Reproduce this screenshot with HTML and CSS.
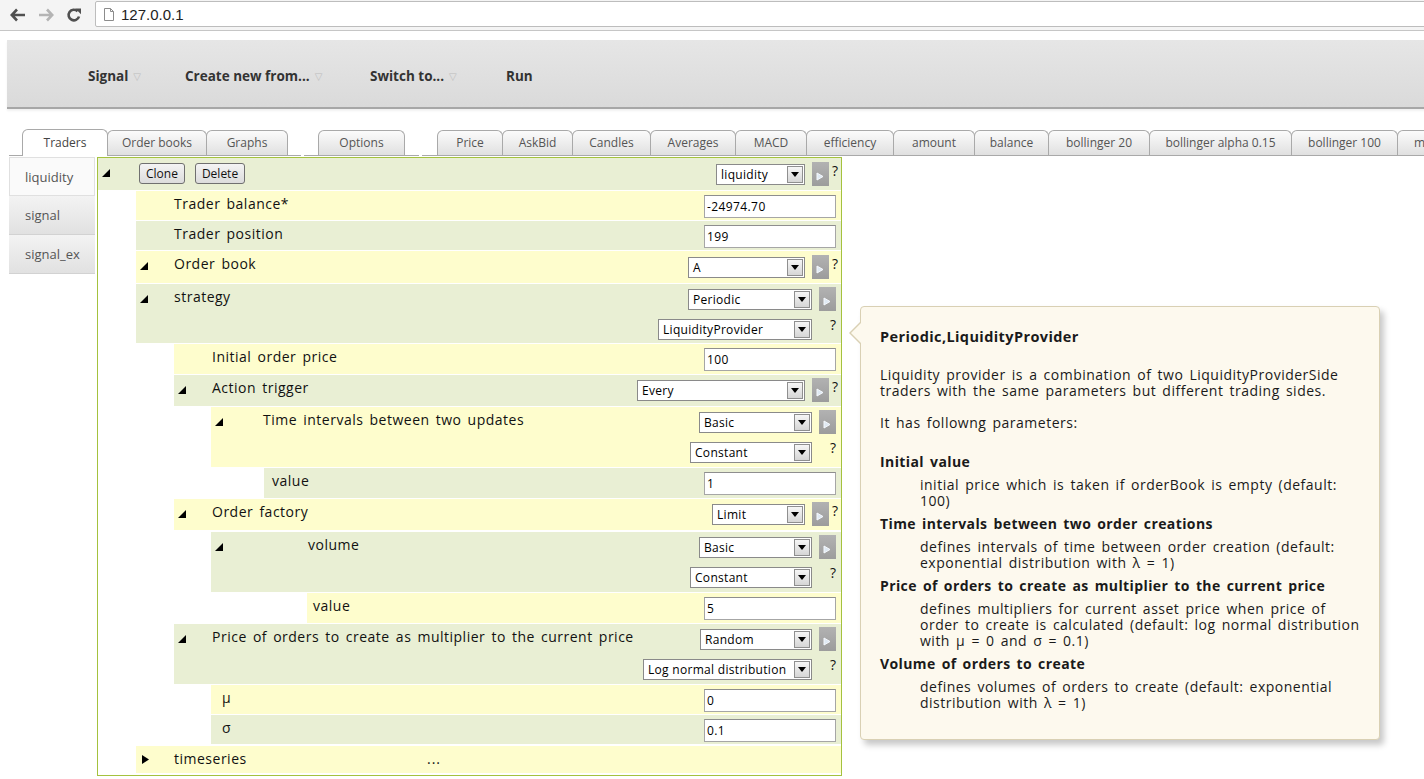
FILE: index.html
```html
<!DOCTYPE html>
<html>
<head>
<meta charset="utf-8">
<title>Simulation</title>
<link rel="stylesheet" href="styles.css">
</head>
<body>
<div class="chrome">
  <div class="nav">
    <span class="navbtn"><svg width="16" height="14" viewBox="0 0 16 14"><path d="M7 1.5L1.8 7L7 12.5M2 7H15" fill="none" stroke="#505050" stroke-width="2.6" stroke-linejoin="miter"/></svg></span>
    <span class="navbtn"><svg width="16" height="14" viewBox="0 0 16 14"><path d="M9 1.5L14.2 7L9 12.5M14 7H1" fill="none" stroke="#b4b4b4" stroke-width="2.6"/></svg></span>
    <span class="navbtn"><svg width="16" height="16" viewBox="0 0 16 16"><path d="M13 9.5A5.3 5.3 0 1 1 11.6 4.2" fill="none" stroke="#505050" stroke-width="2.6"/><path d="M9.2 1.5H15V7.3z" fill="#505050"/></svg></span>
  </div>
  <div class="omnibox">
    <svg class="docic" width="10" height="13" viewBox="0 0 10 13"><path d="M0.5 0.5H6.5L9.5 3.5V12.5H0.5z M6.5 0.5V3.5H9.5" fill="#fff" stroke="#8c8c8c"/></svg>
    <span class="url">127.0.0.1</span>
  </div>
</div>

<div class="page">
  <div class="menubar">
    <span class="mi mi1">Signal<span class="caret">▽</span></span>
    <span class="mi mi2">Create new from...<span class="caret">▽</span></span>
    <span class="mi mi3">Switch to...<span class="caret">▽</span></span>
    <span class="mi">Run</span>
  </div>

  <div class="tabbar">
    <ul class="tabs first">
      <li class="tab active t86">Traders</li>
      <li class="tab t100">Order books</li>
      <li class="tab t82">Graphs</li>
    </ul>
    <ul class="tabs">
      <li class="tab t87">Options</li>
    </ul>
    <ul class="tabs last">
      <li class="tab t66">Price</li>
      <li class="tab t71">AskBid</li>
      <li class="tab t79">Candles</li>
      <li class="tab t86">Averages</li>
      <li class="tab t72">MACD</li>
      <li class="tab t88">efficiency</li>
      <li class="tab t82">amount</li>
      <li class="tab t75">balance</li>
      <li class="tab t102">bollinger 20</li>
      <li class="tab t143">bollinger alpha 0.15</li>
      <li class="tab t107">bollinger 100</li>
      <li class="tab t90 tleft">macd</li>
    </ul>
  </div>

  <div class="main">
    <ul class="side">
      <li class="active">liquidity</li>
      <li>signal</li>
      <li>signal_ex</li>
    </ul>

    <div class="tree">
      <div class="row g h32">
        <span class="tri tw41"><svg width="8" height="8" viewBox="0 0 8 8"><path d="M8 0V8H0z"/></svg></span>
        <span class="btn">Clone</span>
        <span class="btn">Delete</span>
        <span class="fill"></span>
        <span class="ctl">
          <span class="sel w89"><span class="st">liquidity</span><span class="dd"></span></span>
          <span class="go"><svg width="8" height="9" viewBox="0 0 8 9"><path d="M1 1L7 4.5L1 8z" fill="#dfe9f3" stroke="#f6f9fd"/></svg></span>
          <span class="q">?</span>
        </span>
      </div>

      <div class="kids k38">
        <div class="row y h29">
          <span class="lbl pl38">Trader balance*</span>
          <span class="ctl ci"><span class="inp">-24974.70</span></span>
        </div>
        <div class="row g h29">
          <span class="lbl pl38">Trader position</span>
          <span class="ctl ci"><span class="inp">199</span></span>
        </div>
        <div class="row y h32">
          <span class="tri tw38"><svg width="8" height="8" viewBox="0 0 8 8"><path d="M8 0V8H0z"/></svg></span>
          <span class="lbl">Order book</span>
          <span class="ctl">
            <span class="sel w117"><span class="st">A</span><span class="dd"></span></span>
            <span class="go"><svg width="8" height="9" viewBox="0 0 8 9"><path d="M1 1L7 4.5L1 8z" fill="#dfe9f3" stroke="#f6f9fd"/></svg></span>
            <span class="q">?</span>
          </span>
        </div>
        <div class="row g h59">
          <span class="tri tw38"><svg width="8" height="8" viewBox="0 0 8 8"><path d="M8 0V8H0z"/></svg></span>
          <span class="lbl">strategy</span>
          <span class="ctl dbl">
            <span class="line">
              <span class="sel w124"><span class="st">Periodic</span><span class="dd"></span></span>
              <span class="go"><svg width="8" height="9" viewBox="0 0 8 9"><path d="M1 1L7 4.5L1 8z" fill="#dfe9f3" stroke="#f6f9fd"/></svg></span>
            </span>
            <span class="line">
              <span class="sel w154"><span class="st">LiquidityProvider</span><span class="dd"></span></span>
              <span class="q2">?</span>
            </span>
          </span>
        </div>

        <div class="kids k38">
          <div class="row y h30">
            <span class="lbl pl38">Initial order price</span>
            <span class="ctl ci"><span class="inp">100</span></span>
          </div>
          <div class="row g h31">
            <span class="tri tw38"><svg width="8" height="8" viewBox="0 0 8 8"><path d="M8 0V8H0z"/></svg></span>
            <span class="lbl">Action trigger</span>
            <span class="ctl cs">
              <span class="sel w168"><span class="st">Every</span><span class="dd"></span></span>
              <span class="go"><svg width="8" height="9" viewBox="0 0 8 9"><path d="M1 1L7 4.5L1 8z" fill="#dfe9f3" stroke="#f6f9fd"/></svg></span>
              <span class="q">?</span>
            </span>
          </div>
          <div class="kids k37">
            <div class="row y h60">
              <span class="tri tw52"><svg width="8" height="8" viewBox="0 0 8 8"><path d="M8 0V8H0z"/></svg></span>
              <span class="lbl">Time intervals between two updates</span>
              <span class="ctl dbl">
                <span class="line">
                  <span class="sel w113"><span class="st">Basic</span><span class="dd"></span></span>
                  <span class="go"><svg width="8" height="9" viewBox="0 0 8 9"><path d="M1 1L7 4.5L1 8z" fill="#dfe9f3" stroke="#f6f9fd"/></svg></span>
                </span>
                <span class="line">
                  <span class="sel w122"><span class="st">Constant</span><span class="dd"></span></span>
                  <span class="q2">?</span>
                </span>
              </span>
            </div>
            <div class="kids k53">
              <div class="row g h30">
                <span class="lbl pl8">value</span>
                <span class="ctl ci"><span class="inp">1</span></span>
              </div>
            </div>
          </div>
          <div class="row y h31">
            <span class="tri tw38"><svg width="8" height="8" viewBox="0 0 8 8"><path d="M8 0V8H0z"/></svg></span>
            <span class="lbl">Order factory</span>
            <span class="ctl cs">
              <span class="sel w93"><span class="st">Limit</span><span class="dd"></span></span>
              <span class="go"><svg width="8" height="9" viewBox="0 0 8 9"><path d="M1 1L7 4.5L1 8z" fill="#dfe9f3" stroke="#f6f9fd"/></svg></span>
              <span class="q">?</span>
            </span>
          </div>
          <div class="kids k37">
            <div class="row g h60 mt2">
              <span class="tri tw97"><svg width="8" height="8" viewBox="0 0 8 8"><path d="M8 0V8H0z"/></svg></span>
              <span class="lbl">volume</span>
              <span class="ctl dbl">
                <span class="line">
                  <span class="sel w113"><span class="st">Basic</span><span class="dd"></span></span>
                  <span class="go"><svg width="8" height="9" viewBox="0 0 8 9"><path d="M1 1L7 4.5L1 8z" fill="#dfe9f3" stroke="#f6f9fd"/></svg></span>
                </span>
                <span class="line">
                  <span class="sel w122"><span class="st">Constant</span><span class="dd"></span></span>
                  <span class="q2">?</span>
                </span>
              </span>
            </div>
            <div class="kids k96">
              <div class="row y h30">
                <span class="lbl pl6">value</span>
                <span class="ctl ci"><span class="inp">5</span></span>
              </div>
            </div>
          </div>
          <div class="row g h60 mt1">
            <span class="tri tw38"><svg width="8" height="8" viewBox="0 0 8 8"><path d="M8 0V8H0z"/></svg></span>
            <span class="lbl">Price of orders to create as multiplier to the current price</span>
            <span class="ctl dbl">
              <span class="line">
                <span class="sel w112"><span class="st">Random</span><span class="dd"></span></span>
                <span class="go"><svg width="8" height="9" viewBox="0 0 8 9"><path d="M1 1L7 4.5L1 8z" fill="#dfe9f3" stroke="#f6f9fd"/></svg></span>
              </span>
              <span class="line">
                <span class="sel w169"><span class="st">Log normal distribution</span><span class="dd"></span></span>
                <span class="q2">?</span>
              </span>
            </span>
          </div>
          <div class="kids k37">
            <div class="row y h29">
              <span class="lbl pl11">μ</span>
              <span class="ctl ci"><span class="inp">0</span></span>
            </div>
            <div class="row g h29">
              <span class="lbl pl11">σ</span>
              <span class="ctl ci"><span class="inp">0.1</span></span>
            </div>
          </div>
        </div>

        <div class="row y h27 mt2">
          <span class="tri tw38 trc"><svg width="7" height="9" viewBox="0 0 7 9"><path d="M0 0L7 4.5L0 9z"/></svg></span>
          <span class="lbl"><span class="tsl">timeseries</span><span class="more">...</span></span>
        </div>
      </div>
    </div>

    <div class="tip">
      <div class="tip-title">Periodic,LiquidityProvider</div>
      <p class="tip-p">Liquidity provider is a combination of two LiquidityProviderSide<br>traders with the same parameters but different trading sides.</p>
      <p class="tip-p2">It has followng parameters:</p>
      <dl class="tip-dl">
        <dt>Initial value</dt>
        <dd>initial price which is taken if orderBook is empty (default:<br>100)</dd>
        <dt>Time intervals between two order creations</dt>
        <dd>defines intervals of time between order creation (default:<br>exponential distribution with λ = 1)</dd>
        <dt>Price of orders to create as multiplier to the current price</dt>
        <dd>defines multipliers for current asset price when price of<br>order to create is calculated (default: log normal distribution<br>with μ = 0 and σ = 0.1)</dd>
        <dt>Volume of orders to create</dt>
        <dd>defines volumes of orders to create (default: exponential<br>distribution with λ = 1)</dd>
      </dl>
    </div>
  </div>
</div>
</body>
</html>
```

FILE: styles.css
```css
* { box-sizing: border-box; }
html, body { margin: 0; padding: 0; }
body {
  width: 1424px;
  height: 779px;
  overflow: hidden;
  background: #fff;
  font-family: "Open Sans", "DejaVu Sans", sans-serif;
  color: #1a1a1a;
}

/* browser chrome */
.chrome {
  height: 31px;
  background: #f4f4f4;
  border-bottom: 1px solid #c6c6c6;
  display: flex;
  align-items: center;
}
.nav { display: flex; padding-left: 10px; width: 95px; }
.navbtn { width: 28px; height: 16px; display: flex; align-items: center; }
.omnibox {
  flex: 1;
  height: 26px;
  margin-top: -2px;
  margin-right: -6px;
  background: #fff;
  border: 1px solid #bdbdbd;
  border-radius: 2px;
  display: flex;
  align-items: center;
  padding-left: 8px;
}
.docic { display: block; }
.url {
  margin-left: 7px;
  font-family: "Liberation Sans", Arial, sans-serif;
  font-size: 15px;
  color: #222;
}

/* menu bar */
.menubar {
  margin: 9px -20px 0 7px;
  height: 69px;
  background: linear-gradient(#e6e6e6, #dadada);
  border-bottom: 2px solid #a7a7a7;
  box-shadow: 0 2px 2px rgba(0, 0, 0, 0.06);
  display: flex;
  align-items: center;
  padding: 4px 0 0 81px;
  font-weight: bold;
  font-size: 13.5px;
  color: #333;
}
.mi { white-space: nowrap; }
.mi1 { width: 97px; }
.mi2 { width: 185px; }
.mi3 { width: 136px; }
.caret {
  font-family: "DejaVu Sans", sans-serif;
  font-weight: normal;
  font-size: 10px;
  color: #bdbdbd;
  margin-left: 5px;
  position: relative;
  top: -1px;
}

/* tabs */
.tabbar {
  margin-top: 20px;
  padding-left: 9px;
  height: 27px;
  display: flex;
  align-items: flex-end;
  white-space: nowrap;
  overflow: hidden;
}
.tabs {
  list-style: none;
  margin: 0 3px 0 0;
  padding: 0 14px;
  display: flex;
  align-items: flex-end;
  height: 27px;
  border-bottom: 1px solid #a9a9a9;
  flex: none;
}
.tabs.first { padding: 0 13px; }
.tabs.last { padding-left: 15px; }
.tab {
  flex: none;
  height: 25px;
  padding: 0;
  margin-left: -1px;
  border: 1px solid #a9a9a9;
  border-bottom: 0;
  border-radius: 6px 6px 0 0;
  background: linear-gradient(#fbfbfb, #e0e0e0);
  font-size: 12px;
  line-height: 24px;
  text-align: center;
  color: #555;
}
.tab:first-child { margin-left: 0; }
.tab.tleft { text-align: left; padding-left: 16px; }
.tab.active {
  height: 27px;
  margin-bottom: -1px;
  background: #fff;
  position: relative;
  z-index: 1;
  color: #444;
  line-height: 25px;
}
.t66 { width: 66px; }
.t71 { width: 71px; }
.t72 { width: 72px; }
.t75 { width: 75px; }
.t79 { width: 79px; }
.t82 { width: 82px; }
.t86 { width: 86px; }
.t87 { width: 87px; }
.t88 { width: 88px; }
.t90 { width: 90px; }
.t100 { width: 100px; }
.t102 { width: 102px; }
.t107 { width: 107px; }
.t143 { width: 143px; }

/* main */
.main {
  position: relative;
  margin-top: 1px;
  padding-left: 9px;
  display: flex;
  align-items: flex-start;
}
.side {
  list-style: none;
  margin: 0 2px 0 0;
  padding: 0;
  width: 86px;
  flex: none;
}
.side li {
  height: 39px;
  line-height: 39px;
  padding-left: 16px;
  font-size: 13px;
  color: #555;
  background: linear-gradient(#f3f3f3, #e1e1e1);
  border-bottom: 1px solid #d2d2d2;
}
.side li.active {
  background: #fafafa;
  border: 1px solid #e0e0e0;
  padding-left: 15px;
}

/* tree */
.tree {
  width: 745px;
  height: 619px;
  border: 1px solid #a4c23e;
  background: #fff;
  flex: none;
}
.row {
  display: flex;
  align-items: flex-start;
  margin-bottom: 1px;
}
.g { background: #e9efd4; }
.y { background: #fefdcd; }
.h27 { height: 27px; }
.h29 { height: 29px; }
.h30 { height: 30px; }
.h31 { height: 31px; }
.h32 { height: 32px; }
.h59 { height: 59px; }
.h60 { height: 60px; }
.mt1 { margin-top: 1px; }
.mt2 { margin-top: 2px; }

.k37 { margin-left: 37px; }
.k38 { margin-left: 38px; }
.k53 { margin-left: 53px; }
.k96 { margin-left: 96px; }

.tri { flex: none; padding: 11px 0 0 4px; }
.tri svg { display: block; fill: #000; }
.trc { padding-top: 9px; padding-left: 6px; }
.tw38 { width: 38px; }
.tw41 { width: 41px; }
.tw52 { width: 52px; }
.tw97 { width: 97px; }

.lbl {
  flex: 1;
  padding-top: 3px;
  line-height: 20px;
  font-size: 14px;
  letter-spacing: 0.5px;
  word-spacing: 2px;
  color: #111;
  white-space: nowrap;
}
.pl6 { padding-left: 6px; }
.pl8 { padding-left: 8px; }
.pl11 { padding-left: 11px; }
.pl38 { padding-left: 38px; }
.tsl { display: inline-block; width: 253px; }
.more { letter-spacing: 1px; }

.fill { flex: 1; }

.btn {
  flex: none;
  margin-top: 5px;
  margin-right: 10px;
  height: 21px;
  padding: 0 6px;
  border: 1px solid #707070;
  border-radius: 3px;
  background: linear-gradient(#f4f4f4, #dcdcdc);
  font-size: 12px;
  line-height: 19px;
  color: #111;
}

/* controls */
.ctl {
  flex: none;
  display: flex;
  align-items: flex-start;
  padding: 4px 3px 0 0;
}
.ctl.ci { padding-right: 5px; }
.ctl.cs { padding-top: 3px; }
.ctl.dbl {
  flex-direction: column;
  align-items: flex-end;
  padding: 3px 5px 0 0;
}
.line { display: flex; align-items: flex-start; }
.line + .line { margin-top: 6px; }

.inp {
  display: block;
  width: 132px;
  height: 23px;
  border: 1px solid #a6a6a6;
  border-top-color: #8e8e8e;
  background: #fff;
  padding-left: 2px;
  font-size: 12px;
  letter-spacing: 0.4px;
  line-height: 21px;
  color: #000;
}

.sel {
  display: flex;
  height: 21px;
  margin-top: 2px;
  border: 1px solid #8a8a8a;
  background: #fff;
  padding: 1px;
}
.st {
  flex: 1;
  padding-left: 3px;
  font-size: 12px;
  letter-spacing: 0.3px;
  line-height: 17px;
  color: #000;
  white-space: nowrap;
  overflow: hidden;
}
.dd {
  flex: none;
  width: 16px;
  height: 17px;
  border: 1px solid #8f8f8f;
  background: linear-gradient(#f6f6f6, #d6d6d6);
  display: flex;
  align-items: center;
  justify-content: center;
}
.dd::after {
  content: "";
  border-left: 4px solid transparent;
  border-right: 4px solid transparent;
  border-top: 5px solid #000;
}
.w89 { width: 89px; }
.w93 { width: 93px; }
.w112 { width: 112px; }
.w113 { width: 113px; }
.w117 { width: 117px; }
.w122 { width: 122px; }
.w124 { width: 124px; }
.w154 { width: 154px; }
.w168 { width: 168px; }
.w169 { width: 169px; }

.go {
  flex: none;
  width: 17px;
  height: 24px;
  margin-left: 7px;
  background: linear-gradient(#b2b2b2, #9c9c9c);
  padding: 10px 0 0 4px;
}
.go svg { display: block; }
.q {
  flex: none;
  width: 9px;
  text-align: right;
  font-size: 14px;
  line-height: 18px;
  color: #111;
}
.q2 {
  flex: none;
  width: 24px;
  text-align: right;
  font-size: 14px;
  line-height: 16px;
  color: #111;
}

/* tooltip */
.tip {
  position: absolute;
  left: 860px;
  top: 149px;
  width: 520px;
  height: 434px;
  background: #fdf9ee;
  border: 1px solid #d9d0b4;
  border-radius: 4px;
  box-shadow: 4px 5px 6px rgba(0, 0, 0, 0.22);
  padding: 20px 19px;
  font-size: 14px;
  letter-spacing: 0.5px;
  word-spacing: 2px;
  color: #1a1a1a;
  white-space: nowrap;
}
.tip::before {
  content: "";
  position: absolute;
  left: -12px;
  top: 14px;
  border-top: 12px solid transparent;
  border-bottom: 12px solid transparent;
  border-right: 12px solid #d9d0b4;
}
.tip::after {
  content: "";
  position: absolute;
  left: -10px;
  top: 15px;
  border-top: 11px solid transparent;
  border-bottom: 11px solid transparent;
  border-right: 11px solid #fdf9ee;
}
.tip-title {
  font-weight: bold;
  line-height: 20px;
  font-size: 14.5px;
  letter-spacing: 0.4px;
}
.tip-p { margin: 20px 0 0 0; line-height: 16px; }
.tip-p2 { margin: 16px 0 0 0; line-height: 16px; }
.tip-dl { margin: 23px 0 0 0; }
.tip-dl dt { font-weight: bold; letter-spacing: 0.4px; line-height: 16px; margin-bottom: 7px; }
.tip-dl dd { margin: 0 0 7px 40px; line-height: 16px; }
```
